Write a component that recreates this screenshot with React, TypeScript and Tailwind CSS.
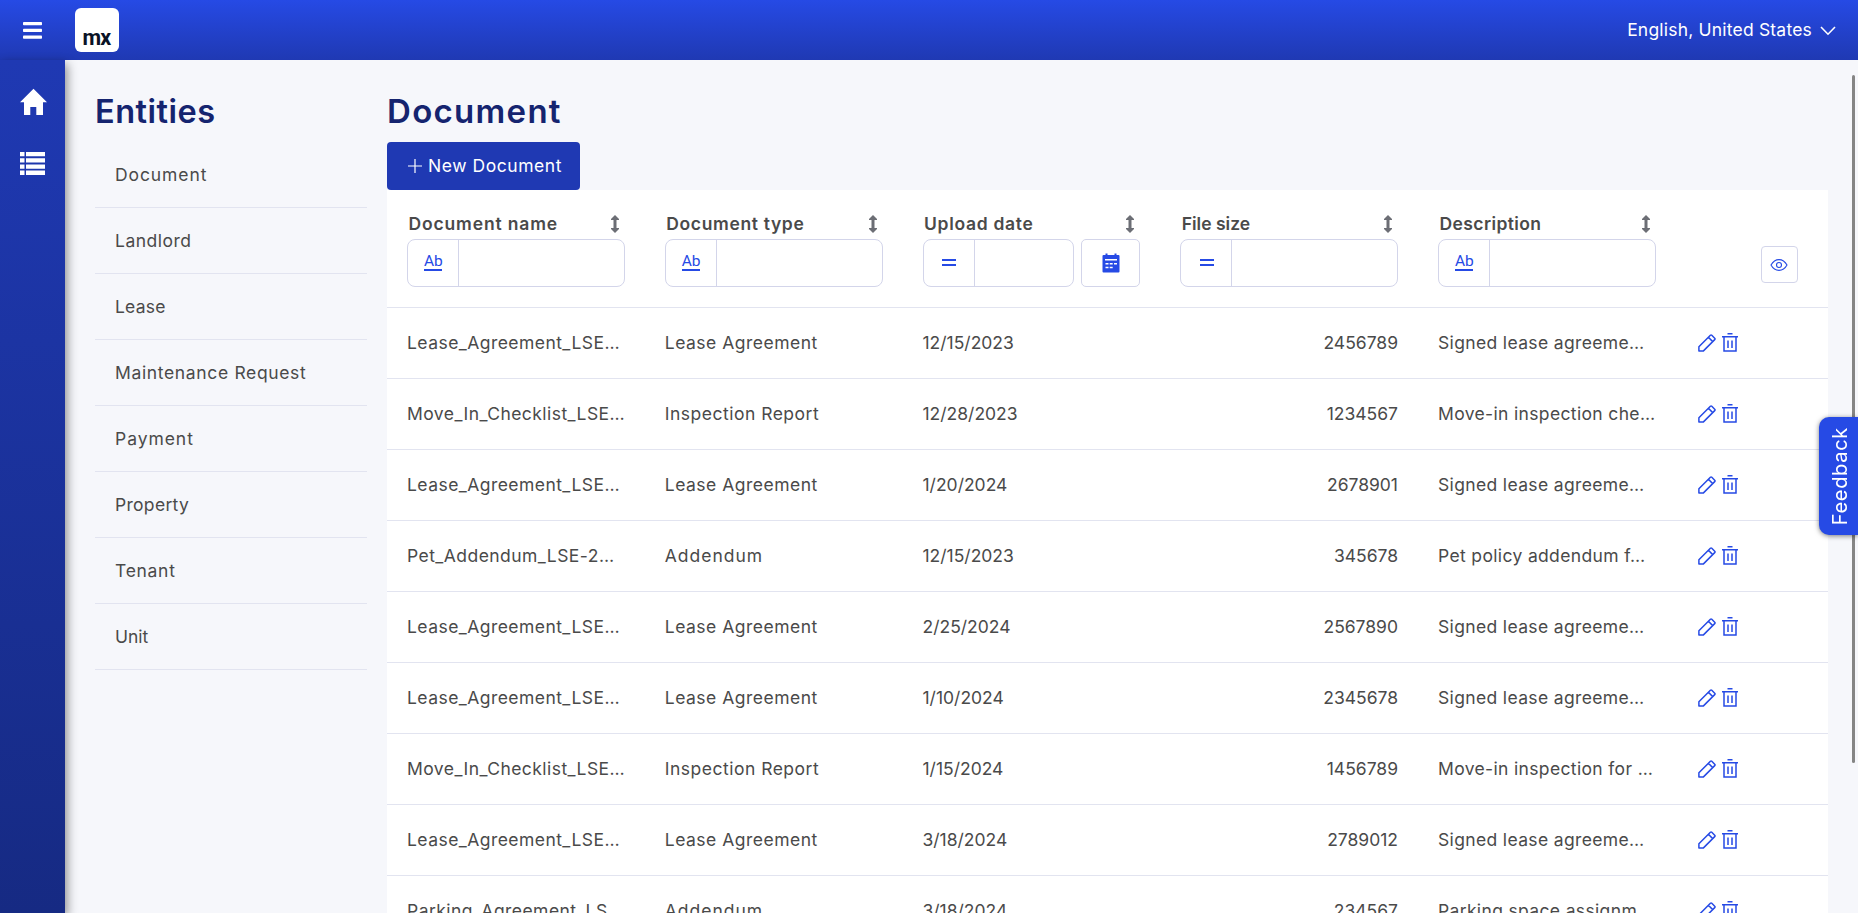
import { useState } from 'react';

const entities = [
  { name: 'Document', spacing: 'tracking-[0.9px]' },
  { name: 'Landlord', spacing: 'tracking-[0.5px]' },
  { name: 'Lease', spacing: 'tracking-[0.2px]' },
  { name: 'Maintenance Request', spacing: 'tracking-[0.65px]' },
  { name: 'Payment', spacing: 'tracking-[0.95px]' },
  { name: 'Property', spacing: 'tracking-[0.3px]' },
  { name: 'Tenant', spacing: 'tracking-[0.7px]' },
  { name: 'Unit', spacing: 'tracking-normal' },
];

const documents = [
  { name: 'Lease_Agreement_LSE…', type: 'Lease Agreement', date: '12/15/2023', size: '2456789', description: 'Signed lease agreeme…' },
  { name: 'Move_In_Checklist_LSE…', type: 'Inspection Report', date: '12/28/2023', size: '1234567', description: 'Move-in inspection che…' },
  { name: 'Lease_Agreement_LSE…', type: 'Lease Agreement', date: '1/20/2024', size: '2678901', description: 'Signed lease agreeme…' },
  { name: 'Pet_Addendum_LSE-2…', type: 'Addendum', date: '12/15/2023', size: '345678', description: 'Pet policy addendum f…' },
  { name: 'Lease_Agreement_LSE…', type: 'Lease Agreement', date: '2/25/2024', size: '2567890', description: 'Signed lease agreeme…' },
  { name: 'Lease_Agreement_LSE…', type: 'Lease Agreement', date: '1/10/2024', size: '2345678', description: 'Signed lease agreeme…' },
  { name: 'Move_In_Checklist_LSE…', type: 'Inspection Report', date: '1/15/2024', size: '1456789', description: 'Move-in inspection for …' },
  { name: 'Lease_Agreement_LSE…', type: 'Lease Agreement', date: '3/18/2024', size: '2789012', description: 'Signed lease agreeme…' },
  { name: 'Parking_Agreement_LS…', type: 'Addendum', date: '3/18/2024', size: '234567', description: 'Parking space assignm…' },
];

const columns = [
  { label: 'Document name', kind: 'text', spacing: 'tracking-[0.85px]' },
  { label: 'Document type', kind: 'text', spacing: 'tracking-[0.65px]' },
  { label: 'Upload date', kind: 'date', spacing: 'tracking-[0.7px]' },
  { label: 'File size', kind: 'number', spacing: 'tracking-normal' },
  { label: 'Description', kind: 'text', spacing: 'tracking-[0.4px]' },
];

const grid = 'grid grid-cols-[repeat(5,257.75px)_85px_1fr]';

function SortIcon() {
  return (
    <svg width="8" height="18" viewBox="0 0 8 18" fill="#6c6e75" className="mb-0.5">
      <path d="M4 0 8 4v1H5.500v8H8v1l-4 4-4-4v-1h2.500V5H0V4z" />
    </svg>
  );
}

function TextFilterIcon() {
  return (
    <span className="mb-0.5 flex w-[18px] flex-col border-b-2 border-[#264ae5] text-center font-[Roboto] text-[15.5px] leading-[15px] text-[#264ae5]">
      Ab
    </span>
  );
}

function EqualsIcon() {
  return (
    <svg width="14" height="8" viewBox="0 0 14 8" fill="#264ae5" className="ml-px">
      <path d="M0 0h14v2H0zM0 5h14v2H0z" />
    </svg>
  );
}

function CalendarIcon() {
  return (
    <svg width="18" height="20" viewBox="0 0 18 20">
      <path d="M1.500 2H3.500V.5h2V2h7V.5h2V2h2A1 1 0 0 1 17.500 3v15.500a1 1 0 0 1-1 1h-15a1 1 0 0 1-1-1V3a1 1 0 0 1 1-1z" fill="#264ae5" />
      <path d="M3 6h12v1.500H3zM3.500 10h3v1.500h-3zM7.700 10h3v1.500h-3zM12 10h3v1.500h-3zM3.500 13.700h3v1.500h-3zM7.700 13.700h3v1.500h-3z" fill="#fff" />
    </svg>
  );
}

function EyeIcon() {
  return (
    <svg width="18" height="14" viewBox="0 0 18 14" fill="none" stroke="#264ae5" strokeWidth="1.100">
      <path d="M1 7c2-3.600 4.700-5.400 8-5.400s6 1.800 8 5.400c-2 3.600-4.700 5.400-8 5.400S3 10.600 1 7z" />
      <circle cx="9" cy="7" r="2.500" />
    </svg>
  );
}

function PencilIcon() {
  return (
    <svg width="18" height="18" viewBox="0 0 18 18" fill="none" stroke="#264ae5" strokeWidth="1.500" strokeLinejoin="round">
      <path d="M.9 12.800 12.400 1.300a1 1 0 0 1 1.400 0l2.900 2.900a1 1 0 0 1 0 1.400L5.200 17.100H.9zM10.400 3.300l4.300 4.300" />
    </svg>
  );
}

function TrashIcon() {
  return (
    <svg width="16" height="19" viewBox="0 0 16 19" fill="none" stroke="#264ae5" strokeWidth="1.500">
      <path d="M5.500.7h5M0 3.700h16M2 3.700v14.200h12V3.700M6 7.500v7.500M10 7.500v7.500" />
    </svg>
  );
}

function Filter({ kind }: { kind: string }) {
  return (
    <div className="flex h-12 gap-[7px]">
      <div className="flex flex-1 rounded-lg border border-[#d3d5ea]">
        <button className="flex w-[51px] items-center justify-center border-r border-[#d3d5ea]">
          {kind === 'text' ? <TextFilterIcon /> : <EqualsIcon />}
        </button>
        <input type="text" className="w-0 flex-1 px-3 outline-none" />
      </div>
      {kind === 'date' && (
        <button className="flex w-[59px] items-center justify-center rounded-[5px] border border-[#d3d5ea]">
          <CalendarIcon />
        </button>
      )}
    </div>
  );
}

export default function App() {
  const [expanded, setExpanded] = useState(false);

  return (
    <div className="flex h-[913px] w-[1858px] flex-col overflow-hidden bg-[#f6f7fb] font-[Inter,sans-serif] text-[17.5px] text-[#4a4a4a]">
      <header className="flex h-[60px] shrink-0 items-center bg-linear-to-b from-[#264ae5] to-[#1f39b3] text-white">
        <button className="flex w-[65px] justify-center" onClick={() => setExpanded(!expanded)}>
          <svg width="19" height="17" viewBox="0 0 19 17" fill="#fff">
            <rect width="19" height="3.200" rx=".8" />
            <rect y="6.800" width="19" height="3.200" rx=".8" />
            <rect y="13.500" width="19" height="3.200" rx=".8" />
          </svg>
        </button>
        <div className="ml-2.5 flex size-11 items-end justify-center rounded-md bg-white pb-0.5 pr-px font-[Roboto] text-[21.5px] font-bold leading-6 tracking-[-0.8px] text-[#0a1326]">
          mx
        </div>
        <div className="ml-auto flex items-center gap-2 pr-[22px] tracking-[0.2px]">
          English, United States
          <svg width="16" height="10" viewBox="0 0 16 10" fill="none" stroke="#fff" strokeWidth="1.600" className="mt-0.5">
            <path d="m1 1 7 7.200L15 1" />
          </svg>
        </div>
      </header>

      <div className="flex min-h-0 flex-1">
        <nav className="flex w-[65px] shrink-0 flex-col items-center bg-linear-to-b from-[#1f39b3] to-[#162a83] pt-7 shadow-[2px_4px_10px_rgba(0,0,0,0.45)]">
          <svg width="27" height="27" viewBox="0 0 27 27" fill="#fff" className="ml-0.5">
            <path d="M13.500.8 27 14.200h-4V27h-6.700v-8h-6v8H4V14.200H0z" />
          </svg>
          <svg width="25" height="23" viewBox="0 0 25 23" fill="#fff" className="mt-[37px]">
            <path d="M0 0h4.500v4.300H0zM6 0h19v4.300H6zM0 6.200h4.500v4.300H0zM6 6.200h19v4.300H6zM0 12.400h4.500v4.300H0zM6 12.400h19v4.300H6zM0 18.600h4.500v4.300H0zM6 18.600h19v4.300H6z" />
          </svg>
        </nav>

        <aside className="ml-[30px] w-[272px] shrink-0">
          <h1 className="flex h-[82px] items-center pt-[22px] text-[32.5px] font-semibold tracking-[0.5px] text-[#15246f]">Entities</h1>
          <ul>
            {entities.map((entity) => (
              <li key={entity.name} className={`flex h-[66px] items-center border-b border-[#e2e4f0] px-5 pt-0.5 ${entity.spacing}`}>
                {entity.name}
              </li>
            ))}
          </ul>
        </aside>

        <main className="ml-5 w-[1441px]">
          <h1 className="flex h-[82px] items-center pt-[22px] text-[33px] font-semibold tracking-[1.3px] text-[#15246f]">Document</h1>
          <button className="flex h-12 w-[193px] items-center rounded bg-[#1f39b3] pl-[21px] tracking-[0.55px] text-white">
            <svg width="14" height="14" viewBox="0 0 14 14" stroke="#fff" strokeWidth="1.200" className="mr-1.5">
              <path d="M7 0v14M0 7h14" />
            </svg>
            New Document
          </button>

          <div className="bg-white">
            <div className={`${grid} h-[118px] border-b border-[#e2e4f0]`}>
              {columns.map((column) => (
                <div key={column.label} className="px-5 pt-5">
                  <div className={`flex h-[29px] items-center justify-between pb-px pl-[1.5px] pr-1.5 pt-px font-semibold ${column.spacing}`}>
                    {column.label}
                    <SortIcon />
                  </div>
                  <Filter kind={column.kind} />
                </div>
              ))}
              <div />
              <div className="pt-14">
                <button className="flex size-[37px] items-center justify-center rounded border border-[#d3d5ea]">
                  <EyeIcon />
                </button>
              </div>
            </div>

            {documents.map((doc, i) => (
              <div key={i} className={`${grid} h-[71px] items-center border-b border-[#e2e4f0]`}>
                <div className="whitespace-nowrap px-5 tracking-[0.45px]">{doc.name}</div>
                <div className={`whitespace-nowrap px-5 ${doc.type === 'Addendum' ? 'tracking-[1px]' : 'tracking-[0.5px]'}`}>{doc.type}</div>
                <div className="whitespace-nowrap px-5">{doc.date}</div>
                <div className="whitespace-nowrap px-5 text-right">{doc.size}</div>
                <div className="whitespace-nowrap px-5 tracking-[0.35px]">{doc.description}</div>
                <div className="flex items-center justify-center gap-1.5 pb-px">
                  <PencilIcon />
                  <TrashIcon />
                </div>
              </div>
            ))}
          </div>
        </main>
      </div>

      <div className="fixed left-[1852px] top-[75px] h-[688px] w-[3px] rounded bg-[#858585]" />
      <button className="fixed right-0 top-[417px] flex h-[118px] w-[39px] items-center justify-center rounded-l-[10px] bg-[#264ae5] text-white shadow-[0_1px_5px_rgba(0,0,0,0.5)]">
        <span className="mr-[-2px] rotate-180 text-[20px] tracking-[0.7px] [writing-mode:vertical-rl]">Feedback</span>
      </button>
    </div>
  );
}
